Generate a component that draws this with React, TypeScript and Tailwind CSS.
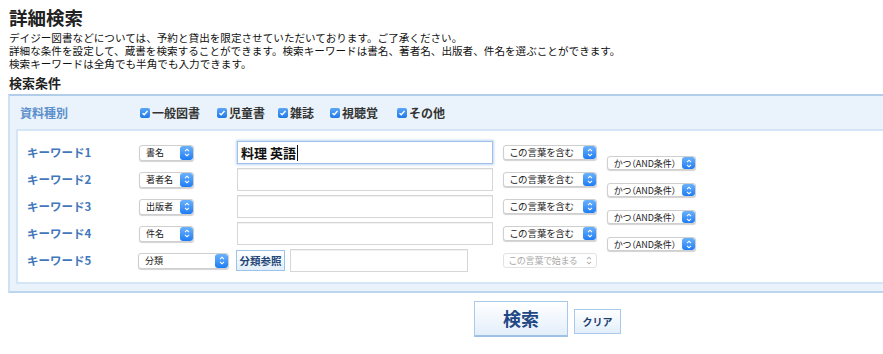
import type { ReactNode } from 'react'

const font = { fontFamily: '"Noto Sans CJK JP", "Noto Sans", sans-serif' }

function Chevrons({ color = 'white' }: { color?: string }) {
  return (
    <svg width="6" height="9" viewBox="0 0 6 9" fill="none">
      <path d="M1 3.2 L3 1.2 L5 3.2" stroke={color} strokeWidth="1.1" />
      <path d="M1 5.8 L3 7.8 L5 5.8" stroke={color} strokeWidth="1.1" />
    </svg>
  )
}

function Select({
  label,
  className,
  disabled,
  textClass = 'text-[9px]',
}: {
  label: string
  className: string
  disabled?: boolean
  textClass?: string
}) {
  if (disabled) {
    return (
      <div
        className={`flex items-center rounded-[3px] border border-[#e2e2e2] bg-white ${className}`}
      >
        <span
          className={`min-w-0 flex-1 whitespace-nowrap pl-[5px] leading-none text-[#a8a8a8] [font-feature-settings:'palt'] ${textClass}`}
        >
          {label}
        </span>
        <span className="flex w-[14px] shrink-0 items-center justify-center">
          <Chevrons color="#b5b5b5" />
        </span>
      </div>
    )
  }
  return (
    <div
      className={`flex items-stretch overflow-hidden rounded-[3px] border border-[#cfcfcf] bg-white shadow-[0_1px_1px_rgba(0,0,0,0.18)] ${className}`}
    >
      <span
        className={`flex min-w-0 flex-1 items-center whitespace-nowrap pl-[6px] leading-none text-[#1a1a1a] [font-feature-settings:'palt'] ${textClass}`}
      >
        {label}
      </span>
      <span className="flex w-[13px] shrink-0 items-center justify-center rounded-[3px] bg-gradient-to-b from-[#69b1fb] to-[#1b7cf4]">
        <Chevrons />
      </span>
    </div>
  )
}

function Check({ label }: { label: string }) {
  return (
    <div className="flex items-center gap-[2px]">
      <span className="flex h-[10px] w-[10px] items-center justify-center rounded-[2px] bg-gradient-to-b from-[#5aa6f7] to-[#1e78e6]">
        <svg width="8" height="8" viewBox="0 0 8 8" fill="none">
          <path d="M1.5 4.2 L3.2 5.8 L6.5 2" stroke="white" strokeWidth="1.4" />
        </svg>
      </span>
      <span className="text-[12px] font-bold leading-none text-[#333]">{label}</span>
    </div>
  )
}

function TextBox({ className, focus, children }: { className: string; focus?: boolean; children?: ReactNode }) {
  return (
    <div
      className={`flex items-center bg-white ${
        focus
          ? 'border border-[#9fc0ea] shadow-[0_0_2px_1px_rgba(120,170,235,0.45)]'
          : 'border border-[#d6d6d6] shadow-[inset_0_1px_1px_rgba(0,0,0,0.06)]'
      } ${className}`}
    >
      {children}
    </div>
  )
}

const rows = [
  { label: 'キーワード1', field: '書名', value: '料理 英語' },
  { label: 'キーワード2', field: '著者名' },
  { label: 'キーワード3', field: '出版者' },
  { label: 'キーワード4', field: '件名' },
]

export default function App() {
  return (
    <div className="h-[354px] w-[883px] overflow-hidden bg-white text-[#222]" style={font}>
      <div className="px-[9px] pt-[5px]">
        <h1 className="text-[18.5px] font-bold leading-[24px] text-[#222]">詳細検索</h1>
        <div className="mt-[2px] text-[10.6px] leading-[13px] text-[#111]">
          <p>デイジー図書などについては、予約と貸出を限定させていただいております。ご了承ください。</p>
          <p>詳細な条件を設定して、蔵書を検索することができます。検索キーワードは書名、著者名、出版者、件名を選ぶことができます。</p>
          <p>検索キーワードは全角でも半角でも入力できます。</p>
        </div>
        <h2 className="mt-[5px] text-[13px] font-bold leading-[16px] text-[#222]">検索条件</h2>
      </div>

      <div className="ml-[8px] mt-[3px] border-b-2 border-l-2 border-t-2 border-b-[#bcd6f0] border-l-[#cfe2f5] border-t-[#b2cdea] bg-[#eaf3fb] pb-[7px] pl-[6px]">
        <div className="flex h-[33px] items-center pl-[4px]">
          <span className="w-[120px] text-[12px] font-bold text-[#5c8fcb]">資料種別</span>
          <div className="w-[77px]"><Check label="一般図書" /></div>
          <div className="w-[61px]"><Check label="児童書" /></div>
          <div className="w-[52px]"><Check label="雑誌" /></div>
          <div className="w-[67px]"><Check label="視聴覚" /></div>
          <Check label="その他" />
        </div>

        <div className="border-b-2 border-l-2 border-t-2 border-[#d4e5f6] bg-white pb-[10px] pl-[9px] pt-[10px]">
          {rows.map((r, i) => (
            <div key={r.label} className="mb-[4px] flex h-[23px] items-center">
              <span className="w-[112px] text-[11.5px] font-bold text-[#4277bc]">{r.label}</span>
              <Select label={r.field} className="h-[16px] w-[55px]" />
              <TextBox className="ml-[43px] h-[23px] w-[256px] pl-[3px]" focus={i === 0}>
                {r.value && (
                  <span className="border-r border-[#111] pr-[1px] text-[13px] font-bold leading-[16px] text-[#111]">
                    {r.value}
                  </span>
                )}
              </TextBox>
              <Select label="この言葉を含む" className="ml-[10px] h-[15px] w-[94px]" textClass="text-[9.5px]" />
              <Select
                label="かつ（AND条件）"
                className="ml-[10px] mt-[15px] h-[14px] w-[89px] self-start"
                textClass="text-[9px]"
              />
            </div>
          ))}
          <div className="flex h-[23px] items-center">
            <span className="w-[111px] text-[11.5px] font-bold text-[#4277bc]">キーワード5</span>
            <Select label="分類" className="h-[16px] w-[91px]" />
            <button className="ml-[7px] h-[21px] w-[49px] border border-[#9ec3ea] bg-gradient-to-b from-white to-[#e2eefa] text-[10.5px] font-bold text-[#234677]">
              分類参照
            </button>
            <TextBox className="ml-[5px] h-[23px] w-[178px]" />
            <Select label="この言葉で始まる" className="ml-[35px] h-[15px] w-[94px]" textClass="text-[9px]" disabled />
          </div>
        </div>
      </div>

      <div className="mt-[8px] flex items-start pl-[474px]">
        <button className="h-[36px] w-[94px] border border-b-2 border-[#a9c9ea] border-b-[#9ec0e4] bg-gradient-to-b from-white to-[#e3eefa] text-[18px] font-bold text-[#1f4884]">
          検索
        </button>
        <button className="ml-[6px] mt-[8px] h-[25px] w-[47px] border border-[#a9c9ea] bg-gradient-to-b from-white to-[#e3eefa] text-[10px] font-bold text-[#1f3f70]">
          クリア
        </button>
      </div>
    </div>
  )
}
